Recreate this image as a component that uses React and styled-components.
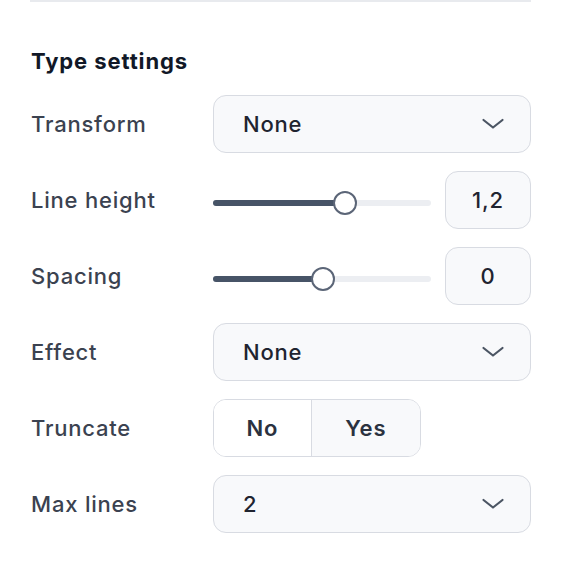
import React from "react";
import styled, { createGlobalStyle } from "styled-components";

const Global = createGlobalStyle`
  html, body { margin: 0; padding: 0; background: #ffffff; }
  body { font-family: Inter, "Noto Sans", sans-serif; -webkit-font-smoothing: antialiased; }
  * { box-sizing: border-box; }
`;

const Panel = styled.div`
  width: 564px;
  height: 574px;
  padding: 0 33px 0 30px;
  background: #ffffff;
`;

const Divider = styled.div`
  height: 2px;
  background: #e8eaee;
`;

const Heading = styled.h3`
  margin: 44px 0 0 1px;
  font-size: 22px;
  line-height: 30px;
  font-weight: 700;
  color: #111827;
  letter-spacing: 0.9px;
`;

const Rows = styled.div`
  margin-top: 19px;
  display: flex;
  flex-direction: column;
  gap: 18px;
`;

const Row = styled.div`
  display: grid;
  grid-template-columns: 183px 1fr;
  align-items: center;
  height: 58px;
`;

const Label = styled.span`
  padding-left: 1px;
  font-size: 22px;
  font-weight: 500;
  letter-spacing: 0.8px;
  color: #3b4250;
`;

const Select = styled.div`
  height: 58px;
  display: flex;
  align-items: center;
  justify-content: space-between;
  padding: 0 24px 0 29px;
  border: 1.5px solid #d8dbe2;
  border-radius: 13px;
  background: #f8f9fb;
  font-size: 22px;
  font-weight: 500;
  letter-spacing: 0.8px;
  color: #1f2430;
`;

const SliderGroup = styled.div`
  display: flex;
  align-items: center;
  gap: 14px;
`;

const Track = styled.div`
  position: relative;
  flex: 1;
  height: 6px;
  margin-top: 6px;
  border-radius: 3px;
  background: #eceef2;
`;

const Fill = styled.div`
  position: absolute;
  left: 0;
  top: 0;
  bottom: 0;
  border-radius: 3px;
  background: #475467;
`;

const Thumb = styled.div`
  position: absolute;
  top: 50%;
  width: 24px;
  height: 24px;
  margin-left: -12px;
  margin-top: -12px;
  border-radius: 50%;
  background: #ffffff;
  border: 2.5px solid #5b6577;
`;

const NumberBox = styled.div`
  width: 86px;
  height: 58px;
  display: flex;
  align-items: center;
  justify-content: center;
  border: 1.5px solid #d8dbe2;
  border-radius: 13px;
  background: #f8f9fb;
  font-size: 22px;
  font-weight: 500;
  letter-spacing: 0.8px;
  color: #1f2430;
`;

const Segmented = styled.div`
  width: 208px;
  height: 58px;
  display: flex;
  border: 1.5px solid #d8dbe2;
  border-radius: 13px;
  overflow: hidden;
`;

const Segment = styled.div`
  flex: ${(p) => p.$flex};
  display: flex;
  align-items: center;
  justify-content: center;
  background: ${(p) => (p.$active ? "#f8f9fb" : "#ffffff")};
  font-size: 22px;
  font-weight: 600;
  letter-spacing: 0.8px;
  color: #2b3240;
  & + & { border-left: 1.5px solid #d8dbe2; }
`;

const Chevron = () => (
  <svg width="26" height="16" viewBox="0 0 26 16" fill="none">
    <polyline points="3.5,4 13,11.5 22.5,4" stroke="#4b5563" strokeWidth="2.2" strokeLinecap="round" strokeLinejoin="round" />
  </svg>
);

const SelectRow = ({ label, value }) => (
  <Row>
    <Label>{label}</Label>
    <Select>
      <span>{value}</span>
      <Chevron />
    </Select>
  </Row>
);

const SliderRow = ({ label, pct, value }) => (
  <Row>
    <Label>{label}</Label>
    <SliderGroup>
      <Track>
        <Fill style={{ width: `${pct}%` }} />
        <Thumb style={{ left: `${pct}%` }} />
      </Track>
      <NumberBox>{value}</NumberBox>
    </SliderGroup>
  </Row>
);

export default function App() {
  return (
    <>
      <Global />
      <Panel>
        <Divider />
        <Heading>Type settings</Heading>
        <Rows>
          <SelectRow label="Transform" value="None" />
          <SliderRow label="Line height" pct={60.5} value="1,2" />
          <SliderRow label="Spacing" pct={50.5} value="0" />
          <SelectRow label="Effect" value="None" />
          <Row>
            <Label>Truncate</Label>
            <Segmented>
              <Segment $flex="98">No</Segment>
              <Segment $flex="110" $active>Yes</Segment>
            </Segmented>
          </Row>
          <SelectRow label="Max lines" value="2" />
        </Rows>
      </Panel>
    </>
  );
}
